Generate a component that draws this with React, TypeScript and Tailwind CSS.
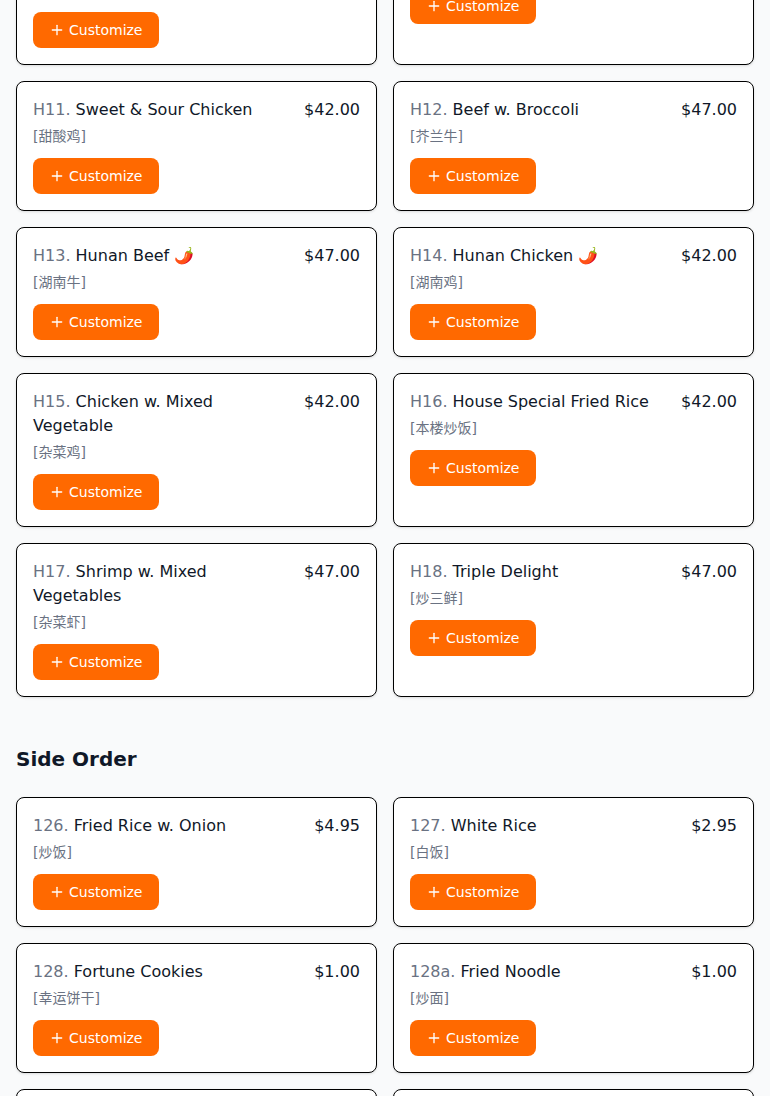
import React from 'react';
import { Plus } from 'lucide-react';

type Item = {
  code: string;
  name: string;
  zh: string;
  price: string;
};

// 上一屏的最后一行（页面已向下滚动，只露出下半截）
const SPECIALS: Item[] = [
  { code: 'H09.', name: 'Kung Pao Chicken w. Peanuts 🌶️', zh: '宫保鸡', price: '$42.00' },
  { code: 'H10.', name: 'Moo Shu Pork', zh: '木须肉', price: '$42.00' },
  { code: 'H11.', name: 'Sweet & Sour Chicken', zh: '甜酸鸡', price: '$42.00' },
  { code: 'H12.', name: 'Beef w. Broccoli', zh: '芥兰牛', price: '$47.00' },
  { code: 'H13.', name: 'Hunan Beef 🌶️', zh: '湖南牛', price: '$47.00' },
  { code: 'H14.', name: 'Hunan Chicken 🌶️', zh: '湖南鸡', price: '$42.00' },
  { code: 'H15.', name: 'Chicken w. Mixed Vegetable', zh: '杂菜鸡', price: '$42.00' },
  { code: 'H16.', name: 'House Special Fried Rice', zh: '本楼炒饭', price: '$42.00' },
  { code: 'H17.', name: 'Shrimp w. Mixed Vegetables', zh: '杂菜虾', price: '$47.00' },
  { code: 'H18.', name: 'Triple Delight', zh: '炒三鲜', price: '$47.00' },
];

const SIDES: Item[] = [
  { code: '126.', name: 'Fried Rice w. Onion', zh: '炒饭', price: '$4.95' },
  { code: '127.', name: 'White Rice', zh: '白饭', price: '$2.95' },
  { code: '128.', name: 'Fortune Cookies', zh: '幸运饼干', price: '$1.00' },
  { code: '128a.', name: 'Fried Noodle', zh: '炒面', price: '$1.00' },
  { code: '129.', name: 'Egg Roll', zh: '蛋卷', price: '$1.75' },
  { code: '130.', name: 'Spring Roll', zh: '春卷', price: '$1.75' },
];

function MenuCard({ item }: { item: Item }) {
  return (
    <div className="rounded-lg border border-black bg-white p-4 shadow-sm">
      <div className="flex items-start justify-between gap-4">
        <div className="text-base leading-6 text-gray-900">
          <span className="text-gray-500">{item.code}</span> {item.name}
        </div>
        <div className="shrink-0 text-base leading-6 text-gray-900">{item.price}</div>
      </div>
      <div className="mt-1 text-sm leading-5 text-gray-500">[{item.zh}]</div>
      <button
        type="button"
        className="mt-3 inline-flex items-center gap-1 rounded-lg bg-orange-500 px-4 py-2 text-sm leading-5 text-white"
      >
        <Plus className="h-4 w-4" strokeWidth={2} />
        Customize
      </button>
    </div>
  );
}

export default function App() {
  return (
    <div className="min-h-screen overflow-hidden bg-gray-50 font-['DejaVu_Sans','Noto_Sans_CJK_SC',sans-serif]">
      <div className="-mt-[89px] px-4">
        {/* 招牌菜 */}
        <section>
          <div className="grid grid-cols-2 gap-4">
            {SPECIALS.map((item) => (
              <MenuCard key={item.code} item={item} />
            ))}
          </div>
        </section>

        {/* 配菜 */}
        <section className="mt-12">
          <h2 className="mb-6 text-xl leading-7 font-bold text-gray-900">Side Order</h2>
          <div className="grid grid-cols-2 gap-4">
            {SIDES.map((item) => (
              <MenuCard key={item.code} item={item} />
            ))}
          </div>
        </section>
      </div>
    </div>
  );
}
